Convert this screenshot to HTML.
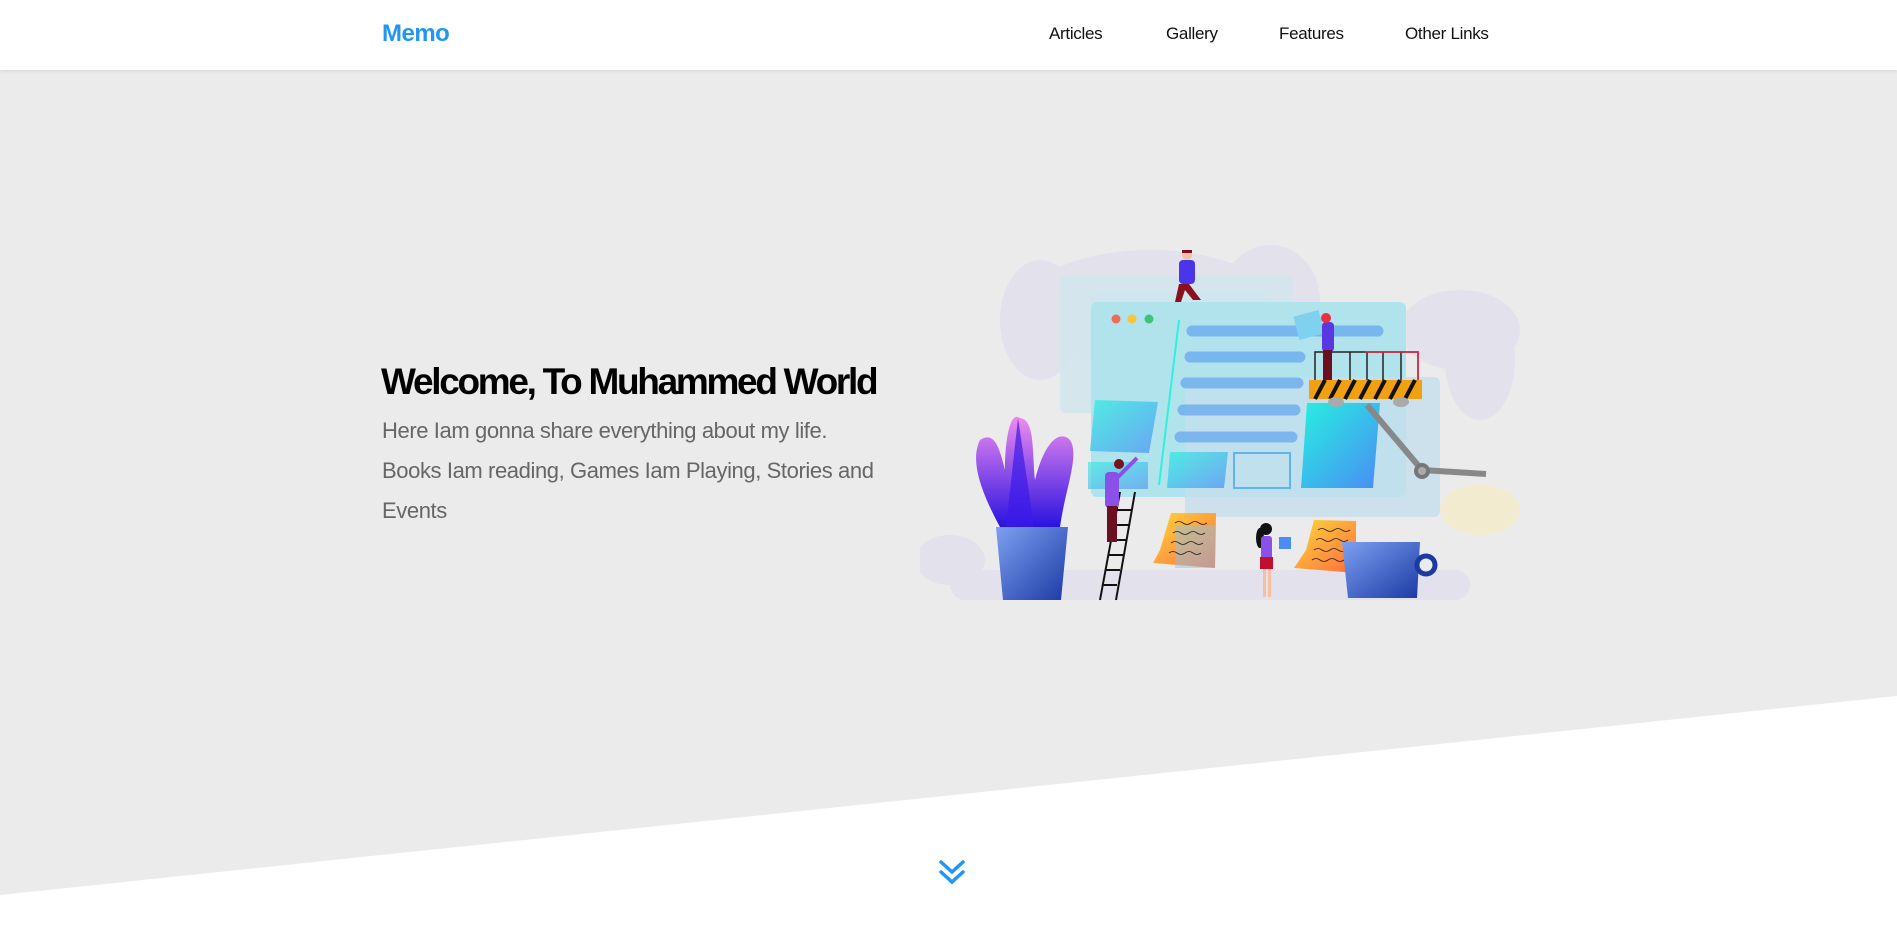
<!DOCTYPE html>
<html><head><meta charset="utf-8"><style>
*{margin:0;padding:0;box-sizing:border-box}
html,body{width:1897px;height:930px;overflow:hidden;background:#ebebeb;font-family:"Liberation Sans",sans-serif}
.hdr{position:absolute;left:0;top:0;width:1897px;height:70px;background:#fff;box-shadow:0 1px 4px rgba(0,0,0,.08);z-index:2}
.logo{position:absolute;left:382px;top:20px;font-size:24px;font-weight:bold;color:#2196f3;letter-spacing:-0.5px}
.nav a{position:absolute;top:24px;font-size:17px;color:#111;text-decoration:none;letter-spacing:-0.3px}
h1{position:absolute;left:381px;top:360px;font-size:37px;font-weight:bold;color:#000;letter-spacing:-2.3px;white-space:nowrap;line-height:44px}
p{position:absolute;left:382px;top:411px;font-size:22px;color:#666;line-height:40px;letter-spacing:-0.4px;white-space:nowrap}
</style></head><body>
<svg style="position:absolute;left:0;top:0" width="1897" height="930"><polygon points="0,895 1897,696 1897,930 0,930" fill="#fff"/>
<path d="M941 862 L952 872 L963 862 M941 872 L952 882 L963 872" stroke="#2196f3" stroke-width="3.5" fill="none" stroke-linecap="round"/></svg>
<div class="hdr"><div class="logo">Memo</div>
<div class="nav"><a style="left:1049px">Articles</a><a style="left:1166px">Gallery</a><a style="left:1279px">Features</a><a style="left:1405px">Other Links</a></div></div>
<h1>Welcome, To Muhammed World</h1>
<p>Here Iam gonna share everything about my life.<br>Books Iam reading, Games Iam Playing, Stories and<br>Events</p>
<svg style="position:absolute;left:920px;top:240px" width="610" height="370" viewBox="0 0 610 370" preserveAspectRatio="none">
<defs>
<linearGradient id="g1" x1="0" y1="0" x2="1" y2="1"><stop offset="0" stop-color="#27efe0"/><stop offset="1" stop-color="#4a8cf5"/></linearGradient>
<linearGradient id="g2" x1="0" y1="0" x2="1" y2="1"><stop offset="0" stop-color="#ffd83a"/><stop offset="1" stop-color="#ff6b3d"/></linearGradient>
<linearGradient id="g3" x1="0" y1="0" x2="0" y2="1"><stop offset="0" stop-color="#f08cf0"/><stop offset="1" stop-color="#2a12e0"/></linearGradient>
<linearGradient id="g4" x1="0" y1="0" x2="1" y2="1"><stop offset="0" stop-color="#7ea0f0"/><stop offset="1" stop-color="#1b3aa5"/></linearGradient>
</defs>
<g fill="#e3e1ec">
<ellipse cx="120" cy="80" rx="40" ry="60"/><ellipse cx="230" cy="70" rx="130" ry="60"/><ellipse cx="350" cy="60" rx="50" ry="55"/>
<ellipse cx="540" cy="90" rx="60" ry="40"/><ellipse cx="560" cy="120" rx="35" ry="60"/><ellipse cx="30" cy="320" rx="35" ry="25"/>
<rect x="30" y="330" width="520" height="30" rx="15"/></g>
<ellipse cx="560" cy="270" rx="40" ry="25" fill="#f2ebcf"/>
<rect x="140" y="35" width="233" height="138" rx="6" fill="#cfe6ee" opacity=".8"/>
<rect x="170" y="52" width="180" height="30" rx="6" fill="#cfe6ee"/>
<rect x="171" y="62" width="315" height="195" rx="6" fill="#b1e3ec"/>
<rect x="265" y="137" width="255" height="140" rx="6" fill="#c6deee" opacity=".8"/>
<circle cx="196" cy="79" r="4.5" fill="#f06a5a"/><circle cx="212" cy="79" r="4.5" fill="#f8c634"/><circle cx="229" cy="79" r="4.5" fill="#3cc47a"/>
<line x1="259" y1="80" x2="239" y2="245" stroke="#30f0e0" stroke-width="2"/>
<g stroke="#6fb0ee" stroke-width="11" stroke-linecap="round" opacity=".85">
<line x1="272" y1="91" x2="458" y2="91"/><line x1="270" y1="117" x2="380" y2="117"/><line x1="266" y1="143" x2="378" y2="143"/><line x1="263" y1="170" x2="375" y2="170"/><line x1="260" y1="197" x2="372" y2="197"/></g>
<polygon points="175,160 238,162 229,213 170,211" fill="url(#g1)" opacity=".7"/>
<rect x="168" y="222" width="60" height="27" fill="url(#g1)" opacity=".6"/>
<polygon points="250,212 308,212 304,248 247,248" fill="url(#g1)" opacity=".7"/>
<rect x="314" y="213" width="56" height="35" fill="none" stroke="#5fb5f0" stroke-width="2"/>
<polygon points="387,163 460,163 453,248 381,248" fill="url(#g1)"/>
<g stroke="#888" stroke-width="6"><line x1="447" y1="165" x2="502" y2="230"/><line x1="502" y1="230" x2="566" y2="234"/></g>
<circle cx="502" cy="231" r="8" fill="#777"/><circle cx="502" cy="231" r="4" fill="#aaa"/>
<g stroke="#222" stroke-width="1.5" fill="none"><path d="M395 140 V112 H498 V140"/><line x1="410" y1="112" x2="410" y2="140"/><line x1="430" y1="112" x2="430" y2="140"/><line x1="447" y1="112" x2="447" y2="140"/><line x1="463" y1="112" x2="463" y2="140"/><line x1="481" y1="112" x2="481" y2="140"/></g>
<path d="M445 112 H498 V140" stroke="#e8203a" stroke-width="1.5" fill="none"/>
<rect x="389" y="140" width="113" height="19" fill="#f0a010"/>
<g stroke="#111" stroke-width="4"><line x1="395" y1="159" x2="405" y2="140"/><line x1="410" y1="159" x2="420" y2="140"/><line x1="425" y1="159" x2="435" y2="140"/><line x1="440" y1="159" x2="450" y2="140"/><line x1="455" y1="159" x2="465" y2="140"/><line x1="470" y1="159" x2="480" y2="140"/><line x1="485" y1="159" x2="495" y2="140"/></g>
<ellipse cx="416" cy="162" rx="8" ry="5" fill="#aaa"/><ellipse cx="481" cy="162" rx="8" ry="5" fill="#aaa"/>
<rect x="376" y="73" width="26" height="24" fill="#80d0f0" transform="rotate(-15 389 85)"/>
<rect x="402" y="82" width="12" height="30" rx="4" fill="#5a38e0"/><rect x="403" y="110" width="9" height="30" fill="#6a1020"/><circle cx="406" cy="78" r="5" fill="#e83040"/>
<rect x="259" y="20" width="16" height="24" rx="4" fill="#4a36e8"/><circle cx="267" cy="15" r="5" fill="#f5c0a0"/><path d="M262 10 h10 v3 h-10z" fill="#7a1020"/><path d="M259 44 l-4 18 h6 l4 -12 l8 10 h8 l-12 -16z" fill="#8a1020"/>
<path d="M80 287 C60 250 50 220 60 200 C75 190 80 210 85 230 C85 200 90 170 100 178 C115 180 112 210 115 240 C125 200 140 190 150 200 C160 215 145 250 140 287z" fill="url(#g3)"/>
<path d="M86 287 L98 178 L114 287z" fill="#3a1ae8" opacity=".7"/>
<polygon points="76,287 148,287 141,360 83,360" fill="url(#g4)"/>
<g stroke="#111" stroke-width="2"><line x1="200" y1="252" x2="180" y2="360"/><line x1="215" y1="252" x2="196" y2="360"/>
<line x1="197" y1="270" x2="212" y2="270"/><line x1="194" y1="285" x2="209" y2="285"/><line x1="191" y1="300" x2="206" y2="300"/><line x1="188" y1="315" x2="203" y2="315"/><line x1="185" y1="330" x2="200" y2="330"/><line x1="182" y1="345" x2="197" y2="345"/></g>
<rect x="185" y="232" width="14" height="36" rx="4" fill="#8a50e8"/><rect x="187" y="266" width="10" height="36" fill="#6a1020"/><circle cx="199" cy="224" r="5" fill="#7a1020"/><line x1="197" y1="238" x2="217" y2="218" stroke="#8a50e8" stroke-width="4"/>
<polygon points="251,273 296,273 295,328 233,323 240,310" fill="url(#g2)"/><rect x="255" y="285" width="40" height="43" fill="#8ec4ea" opacity=".5"/>
<polygon points="394,280 436,281 436,333 374,328 386,310" fill="url(#g2)"/>
<g stroke="#222" stroke-width=".8" fill="none"><path d="M255 283 q4 -3 8 0 t8 0 t8 0 t8 0 M253 293 q4 -3 8 0 t8 0 t8 0 t8 0 M251 303 q4 -3 8 0 t8 0 t8 0 t8 0 M249 313 q4 -3 8 0 t8 0 t8 0 t8 0"/>
<path d="M398 290 q4 -3 8 0 t8 0 t8 0 t8 0 M396 300 q4 -3 8 0 t8 0 t8 0 t8 0 M394 310 q4 -3 8 0 t8 0 t8 0 t8 0 M392 320 q4 -3 8 0 t8 0 t8 0 t8 0"/></g>
<circle cx="346" cy="289" r="6" fill="#111"/><ellipse cx="340" cy="298" rx="4" ry="10" fill="#111"/>
<rect x="341" y="296" width="11" height="24" rx="3" fill="#8a50e8"/><rect x="340" y="317" width="13" height="12" fill="#c01030"/><rect x="343" y="329" width="3" height="28" fill="#f5c0a0"/><rect x="348" y="329" width="3" height="28" fill="#f5c0a0"/>
<rect x="359" y="297" width="12" height="12" fill="#4a8cf5"/>
<polygon points="422,302 500,302 497,358 428,358" fill="url(#g4)"/>
<circle cx="506" cy="325" r="9" fill="none" stroke="#1b3aa5" stroke-width="5"/>
</svg>
</body></html>
